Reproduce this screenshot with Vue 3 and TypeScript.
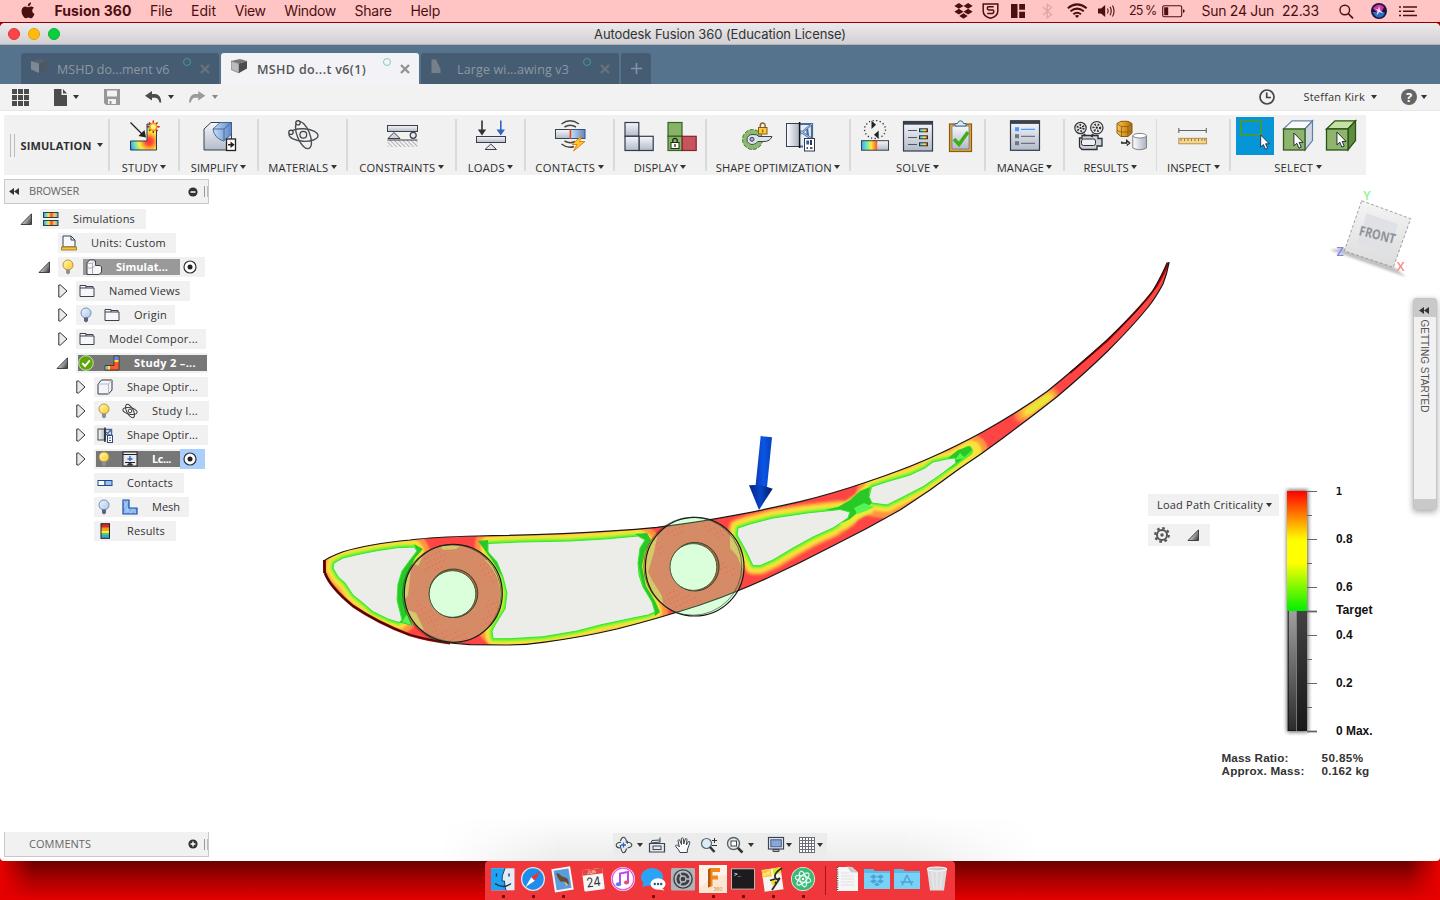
<script setup lang="ts">
interface ToolGroup { label: string; w: number; tw: number; icons: string[] }
interface TreeRow {
  text: string; level: number; w: number; tw: number; icon: string
  exp?: 'open' | 'closed'; lead?: string; bold?: boolean; dark?: string
  darkFrom?: number; darkW?: number; target?: boolean; hot?: boolean
}
interface IconText { t: string; x: number; y: number; size: number; w: number; fill: string; tilt?: number; mono?: boolean }
interface DockItem { id: string; on: boolean; texts?: IconText[] }

// Spreads the letters of a label so that it takes the given width.
const vFit = {
  mounted(el: HTMLElement, binding: { value: number }) {
    const count = (el.textContent ?? '').trim().length
    if (!count) return
    const natural = el.getBoundingClientRect().width
    el.style.letterSpacing = `${(binding.value - natural) / count}px`
  },
}

const menus = [
  { t: 'File', w: 22.5 }, { t: 'Edit', w: 25 }, { t: 'View', w: 31 },
  { t: 'Window', w: 51.5 }, { t: 'Share', w: 37.5 }, { t: 'Help', w: 29.5 },
]

const tabs = [
  { t: 'MSHD do...ment v6', w: 112.5, icon: 't-cube-dim', active: false },
  { t: 'MSHD do...t v6(1)', w: 109, icon: 't-cube', active: true },
  { t: 'Large wi...awing v3', w: 112, icon: 't-draw', active: false },
]

const groups: ToolGroup[] = [
  { label: 'STUDY', w: 70, tw: 36, icons: ['study'] },
  { label: 'SIMPLIFY', w: 79, tw: 47, icons: ['simplify'] },
  { label: 'MATERIALS', w: 89, tw: 60, icons: ['materials'] },
  { label: 'CONSTRAINTS', w: 109, tw: 76, icons: ['constraints'] },
  { label: 'LOADS', w: 69, tw: 37, icons: ['loads'] },
  { label: 'CONTACTS', w: 89, tw: 60, icons: ['contacts'] },
  { label: 'DISPLAY', w: 92, tw: 44, icons: ['disp-a', 'disp-b'] },
  { label: 'SHAPE OPTIMIZATION', w: 144, tw: 116, icons: ['shape-a', 'shape-b'] },
  { label: 'SOLVE', w: 135, tw: 34.5, icons: ['solve-a', 'solve-b', 'solve-c'] },
  { label: 'MANAGE', w: 79, tw: 47, icons: ['manage'] },
  { label: 'RESULTS', w: 92.5, tw: 45, icons: ['results-a', 'results-b'] },
  { label: 'INSPECT', w: 73.5, tw: 44, icons: ['inspect'] },
  { label: 'SELECT', w: 136, tw: 39, icons: ['select-a', 'select-b', 'select-c'] },
]

const rows: TreeRow[] = [
  { text: 'Simulations', level: 0, w: 106, tw: 62, icon: 'n-sims', exp: 'open' },
  { text: 'Units: Custom', level: 1, w: 118, tw: 75, icon: 'n-units' },
  { text: 'Simulat...', level: 1, w: 147, tw: 52, icon: 'n-parts', exp: 'open', lead: 'n-bulb', bold: true, dark: '#999', darkFrom: 25, darkW: 97, target: true },
  { text: 'Named Views', level: 2, w: 114, tw: 71, icon: 'n-folder', exp: 'closed' },
  { text: 'Origin', level: 2, w: 99, tw: 33, icon: 'n-folder', exp: 'closed', lead: 'n-bulb-off' },
  { text: 'Model Compor...', level: 2, w: 130, tw: 89, icon: 'n-folder', exp: 'closed' },
  { text: 'Study 2 –...', level: 2, w: 131, tw: 62, icon: 'n-study', exp: 'open', lead: 'n-check', bold: true, dark: '#777', darkFrom: 2, darkW: 129 },
  { text: 'Shape Optir...', level: 3, w: 114, tw: 71, icon: 'n-cube', exp: 'closed' },
  { text: 'Study I...', level: 3, w: 115, tw: 46, icon: 'n-atom', exp: 'closed', lead: 'n-bulb' },
  { text: 'Shape Optir...', level: 3, w: 114, tw: 71, icon: 'n-shape', exp: 'closed' },
  { text: 'Lc...', level: 3, w: 111, tw: 19, icon: 'n-load', exp: 'closed', lead: 'n-bulb', bold: true, dark: '#777', darkFrom: 2, darkW: 84, target: true, hot: true },
  { text: 'Contacts', level: 3, w: 90, tw: 46, icon: 'n-contact' },
  { text: 'Mesh', level: 3, w: 95, tw: 28, icon: 'n-mesh', lead: 'n-bulb-off' },
  { text: 'Results', level: 3, w: 82, tw: 38, icon: 'n-results' },
]

const ticks = [
  { y: 4, t: '1', w: 6 }, { y: 28 }, { y: 52, t: '0.8', w: 16.5 }, { y: 76 },
  { y: 100, t: '0.6', w: 16.5 }, { y: 124, t: 'Target', w: 36.5, bold: true },
  { y: 148, t: '0.4', w: 16.5 }, { y: 172 }, { y: 196, t: '0.2', w: 16.5 },
  { y: 220 }, { y: 244, t: '0 Max.', w: 36.5, bold: true },
]

const dock: DockItem[] = [
  { id: 'd-finder', on: true }, { id: 'd-safari', on: true }, { id: 'd-mail', on: true },
  {
    id: 'd-cal', on: false, texts: [
      { t: 'JUN', x: 9.8, y: 9.6, size: 4.8, w: 9, fill: '#fff', tilt: -7 },
      { t: '24', x: 8, y: 22.6, size: 13, w: 14.5, fill: '#333', tilt: -7 },
    ],
  },
  { id: 'd-music', on: false }, { id: 'd-msg', on: true }, { id: 'd-prefs', on: false },
  { id: 'd-fusion', on: true, texts: [{ t: '360', x: 15.5, y: 27.2, size: 5, w: 9, fill: '#e8852c' }] },
  { id: 'd-term', on: true, texts: [{ t: '>_', x: 6, y: 12, size: 6, w: 7, fill: '#fff', mono: true }] },
  { id: 'd-pdf', on: true, texts: [{ t: 'pdf', x: 6, y: 10.7, size: 5, w: 7, fill: '#fff', tilt: -8 }] },
  { id: 'd-atom', on: true },
]
const dockRight = ['d-doc', 'd-drop', 'd-apps', 'd-trash']

const body = 'M324 561C327 558 333 555.5 343 551.7C362 546 385 542.5 410 540Q433 537 477 536Q520 535.4 563 533.7Q615 531.3 657 527.3Q700 522 733 515.7Q768 509 800 501.7Q835 493 866 482.3Q900 471 927 459.3Q957 446 983 431.7Q1017 413 1047 391.5Q1075 369 1107 340Q1125 323 1137 310Q1150 296 1154 289Q1162 275 1167 263L1169 262.7Q1167 274 1163 284Q1156 297 1149 306Q1133 326 1107 351.7Q1084 374 1057 396.7Q1030 418 1003 438Q983 453 960 468.3Q930 491 900 510Q867 529 833 545.7Q800 563 767 578.3Q735 593 700 605Q660 618 617 629Q578 638 543 642.3Q525 645 505 645L470 644.7Q440 643 410 635Q378 623 353 606Q330 587 325 573Z'
const holes = [
  { wide: 26, d: 'M334 563L343 558L360 554L377 550.7L397 547.7L414 547L417 551L410 560L402 571L398 584L397 600L402 620L399 622.5L388 619L373 611.7L363 603L353 595L345 583L338 576.7L333 568Z' },
  { wide: 26, d: 'M488 543.5L520 542L570 541L605 539L638 536L645 540L640 548L638 563L639 575L643 587L652 602L655 612L648 615L633 618L600 625L577 631L543 636.7L510 638.7L493 638.7L492 631L495 625L505 609L507 593L503 577L497 562L488 552Z' },
  { wide: 19, d: 'M738 528L750 524L773 518L807 513L840 509.5L850 512L848 518L833 528L813 537L793 548L773 560L760 565.7L753 565.7L747 553L741.7 543L737 535Z' },
  { wide: 27, d: 'M871.7 486.7L887 481.7L910 475L925 468L933 462L947 459L955 458L956 463L940 475L923 486.7L903 497L887 505L872 503L869 496.7Z' },
]
const darkGreen = [
  'M414 544L423 549L415 558L408 574L405 595L407 612L413 626L398 622L402 620L397 600L398 584L402 571L410 560L417 551Z',
  'M478 541L488 540L488 552L497 562L503 577L500 573L492 560Z',
  'M635 534L647 533L651 540L645 552L642 566L646 586L655 601L660 612L655 616L652 602L643 587L638 563L640 548L645 540Z',
  'M825 510L838 507L850 500L860 491L870 487L869 497L872 503L866 508L857 513L850 519L842 523L850 512Z',
  'M948 458L958 450L970 446L972 450L962 459L952 467L940 475Z',
]
</script>

<template>
  <div class="desktop">
    <svg class="sprite" width="0" height="0" aria-hidden="true">
      <defs>
        <linearGradient id="steel" x1="0" y1="0" x2="0" y2="1"><stop offset="0" stop-color="#f6f7fb" /><stop offset="1" stop-color="#b3bac9" /></linearGradient>
        <linearGradient id="steelH"><stop offset="0" stop-color="#fff" /><stop offset="1" stop-color="#a9b0c2" /></linearGradient>
        <linearGradient id="blueG"><stop offset="0" stop-color="#c8defa" /><stop offset="1" stop-color="#5c88c4" /></linearGradient>
        <radialGradient id="heat" gradientUnits="userSpaceOnUse" cx="24" cy="24.500" r="20"><stop offset="0" stop-color="#ff3838" /><stop offset=".17" stop-color="#ff4a38" /><stop offset=".32" stop-color="#ffa030" /><stop offset=".5" stop-color="#f8ee44" /><stop offset=".68" stop-color="#90e490" /><stop offset=".82" stop-color="#50c8f0" /><stop offset=".97" stop-color="#3a80f0" /></radialGradient>
        <linearGradient id="rain"><stop offset="0" stop-color="#4aa0ff" /><stop offset=".3" stop-color="#60e8c0" /><stop offset=".6" stop-color="#ffe840" /><stop offset="1" stop-color="#ff4a20" /></linearGradient>
        <linearGradient id="rainMid"><stop offset="0" stop-color="#3a90f8" /><stop offset=".2" stop-color="#80e0b0" /><stop offset=".35" stop-color="#ffe040" /><stop offset=".55" stop-color="#ff4a28" /><stop offset=".75" stop-color="#ffd040" /><stop offset="1" stop-color="#4ab0f0" /></linearGradient>
        <linearGradient id="gold"><stop offset="0" stop-color="#f4c860" /><stop offset=".5" stop-color="#d99a20" /><stop offset="1" stop-color="#a86c10" /></linearGradient>
        <linearGradient id="tri" x1="0" y1=".2" x2="1" y2=".8"><stop offset=".2" stop-color="#f4f4f4" /><stop offset="1" stop-color="#444" /></linearGradient>
        <linearGradient id="bulbG" x1="0" y1="0" x2="1" y2="1"><stop offset="0" stop-color="#fffbc0" /><stop offset="1" stop-color="#fbc81e" /></linearGradient>
        <linearGradient id="bulbO" x1="0" y1="0" x2="1" y2="1"><stop offset="0" stop-color="#f4f8ff" /><stop offset="1" stop-color="#a8c4f4" /></linearGradient>
        <pattern id="hatch" width="3" height="3" patternUnits="userSpaceOnUse" patternTransform="rotate(-45)"><rect width="3" height="3" fill="#f2f2f4" /><path d="M0 0V3" stroke="#888" stroke-width="1.200" /></pattern>
      </defs>

      <symbol id="cursor" viewBox="0 0 10 16"><path d="M.7 1V13l2.700-2.400 2 4.600 2.200-1-2-4.400H9.300Z" fill="#fff" stroke="#1c2733" stroke-width=".9" /></symbol>

      <!-- Tabs -->
      <symbol id="t-cube" viewBox="0 0 16 15"><path d="M0 2L9 0 16 2 8 4.500Z" fill="#777" /><path d="M0 2L8 4.500V14L0 10.500Z" fill="#bbb" stroke="#666" stroke-width=".6" /><path d="M8 4.500L16 2V9.500L8 14Z" fill="#4c4c4c" /></symbol>
      <symbol id="t-cube-dim" viewBox="0 0 16 15"><path d="M0 2L9 0 16 2 8 4.500Z" fill="#56626e" /><path d="M0 2L8 4.500V14L0 10.500Z" fill="#7c8a95" /><path d="M8 4.500L16 2V9.500L8 14Z" fill="#4d5862" /></symbol>
      <symbol id="t-draw" viewBox="0 0 16 15"><path d="M.5 14V.5H5L9.500 10V14Z" fill="#76808b" /><path d="M7 .5h8V14" fill="none" stroke="#51616f" stroke-width=".7" stroke-dasharray="1.500 2" /></symbol>

      <!-- Tool icons, 38 x 38 -->
      <symbol id="study" viewBox="0 0 38 38">
        <path d="M5.500 24H22V7H31.500V33H5.500Z" fill="url(#heat)" stroke="#2b3a4a" />
        <path d="M5.500 5.500L17 17" stroke="#222" stroke-width="1.200" /><path d="M21 20.500L19.500 13 13.500 19Z" fill="#222" />
        <g stroke="#b81c0c" stroke-width="1.400"><path d="M28.300 3.500V16M22 9.700H34.600M24 5.400L32.600 14M24 14L32.600 5.400" /></g><circle cx="28.300" cy="9.700" r="3.400" fill="#fff7a0" stroke="#ff9a10" stroke-width="1.700" />
      </symbol>
      <symbol id="simplify" viewBox="0 0 38 38">
        <path d="M4 12L11 5.500H31.500V22L28 33H4Z" fill="url(#steel)" stroke="#36424f" />
        <path d="M13 12L20 5.500H31.500V17L23.500 24Q14 21 13 12Z" fill="url(#blueG)" stroke="#3b6299" stroke-width=".9" /><path d="M13 12H24L31.500 5.500M24 12V24" fill="none" stroke="#3b6299" stroke-width=".9" />
        <rect x="26.500" y="22" width="9" height="11.500" fill="#fff" stroke="#222" stroke-width="1.300" /><path d="M28 27h2.500V24.500l4.200 3.200L30.500 31V28.500H28Z" fill="#222" />
      </symbol>
      <symbol id="materials" viewBox="0 0 38 38">
        <g fill="none" stroke="#4b4f55" stroke-width="1.400"><ellipse cx="19.500" cy="18" rx="14.500" ry="6.300" transform="rotate(3 19 18)" /><ellipse cx="19.500" cy="18" rx="14.500" ry="6.300" transform="rotate(68 19.500 18)" /></g>
        <g fill="#e8eaf0" stroke="#3a3d42" stroke-width="1.200"><circle cx="19.300" cy="17.700" r="3.400" /><circle cx="14" cy="5.800" r="2.200" /><circle cx="7" cy="15.300" r="2.200" /></g>
      </symbol>
      <symbol id="constraints" viewBox="0 0 38 38">
        <rect x="4.500" y="8.500" width="30" height="6" fill="url(#steel)" stroke="#3a3f48" /><path d="M11 15.500L17 21.500H5Z" fill="#d4d8e2" stroke="#3a3f48" /><circle cx="30.200" cy="18.300" r="3" fill="#e6e9f0" stroke="#3a3f48" stroke-width="1.200" /><rect x="4.500" y="23" width="30" height="7" fill="url(#hatch)" /><path d="M4.500 23H34.500" stroke="#3a3f48" />
      </symbol>
      <symbol id="loads" viewBox="0 0 38 38">
        <path d="M10 3.500V14" stroke="#333" stroke-width="1.600" /><path d="M5.800 12.500L10 18.500 14.200 12.500Z" fill="#333" /><path d="M28.800 3.500V14" stroke="#3463c8" stroke-width="1.600" /><path d="M24.500 12.500L28.800 18.500 33 12.500Z" fill="#3463c8" />
        <rect x="4.500" y="19.500" width="29" height="6" fill="url(#steel)" stroke="#3a3f48" /><path d="M18.800 27L24.500 32.500H13Z" fill="#e2e5ec" stroke="#3a3f48" />
      </symbol>
      <symbol id="contacts" viewBox="0 0 38 38">
        <g fill="none" stroke="#444" stroke-width="1.500"><path d="M10.500 7Q19 .5 28 7M13.500 10Q19 6.500 25 10M10.500 27Q17 32 23 29.500M13.500 24Q19 27 24 24.500" /></g>
        <rect x="4.500" y="12.500" width="15" height="9" fill="url(#steel)" stroke="#39424f" /><rect x="19.500" y="12.500" width="14.500" height="9" fill="url(#blueG)" stroke="#35557f" /><path d="M19.400 12V22" stroke="#e8421c" stroke-width="1.600" /><path d="M31 18.500L21 27.500H26L22.500 34 34 24.500H28.500Z" fill="#ffc72c" stroke="#d97a14" stroke-width=".9" />
      </symbol>
      <symbol id="disp-a" viewBox="0 0 38 38"><g fill="url(#steel)" stroke="#303c4c" stroke-width="1.200"><rect x="5" y="5.500" width="13.800" height="13.800" /><rect x="5" y="19.300" width="14.200" height="14.200" /><rect x="19.200" y="19.300" width="14" height="14.200" /></g></symbol>
      <symbol id="disp-b" viewBox="0 0 38 38"><g stroke-width="1.200"><rect x="5" y="5.500" width="14" height="13.800" fill="#86b368" stroke="#39621f" /><rect x="5" y="19.300" width="14.200" height="14.200" fill="#86b368" stroke="#39621f" /><rect x="19.200" y="19.300" width="14" height="14.200" fill="#c5545c" stroke="#84242c" /></g><rect x="8" y="25.500" width="8" height="6" fill="#fff" stroke="#1e2a18" /><path d="M9.800 25V23.500a2.200 2.200 0 0 1 4.400 0V25" fill="none" stroke="#1e2a18" stroke-width="1.300" /><path d="M12 27v3" stroke="#1e2a18" stroke-width="1.300" /></symbol>
      <symbol id="shape-a" viewBox="0 0 38 38">
        <circle cx="14.500" cy="22.500" r="7.800" fill="none" stroke="#8cb870" stroke-width="4.500" /><circle cx="14.500" cy="22.500" r="10" fill="none" stroke="#3f7f26" stroke-dasharray="4 1.500" /><path d="M14 17.500Q19 17 21 19.500H34Q32 24.500 26 24.500H20Q17 28 14 27.500A5 5 0 0 1 14 17.500Z" fill="#dfe3ea" stroke="#3c4450" /><circle cx="14" cy="22.300" r="2" fill="#a9b0bc" stroke="#3c4450" />
        <rect x="20.500" y="10.500" width="8.500" height="6.500" fill="#fbc93c" stroke="#8a5a10" /><path d="M22.300 10V8.500a2.400 2.400 0 0 1 4.800 0V10" fill="none" stroke="#8a6a30" stroke-width="1.500" /><path d="M24.700 12.500v3" stroke="#7a4a08" />
      </symbol>
      <symbol id="shape-b" viewBox="0 0 38 38">
        <rect x="5.500" y="6.500" width="13" height="23" fill="url(#steelH)" stroke="#36424f" /><rect x="19" y="6.500" width="12.500" height="23" fill="#e4ecf6" /><path d="M19 7H31V22M19 17L31 7M19 14L31 22M22 29.500H19M26 11L27 19" stroke="#4a6c9c" stroke-width="2.200" fill="none" /><path d="M19 17L31 7M19 14L31 22" stroke="#c2d6f2" stroke-width=".9" /><path d="M18.600 5V31" stroke="#111" stroke-width="1.500" />
        <rect x="23.500" y="21.500" width="10" height="12.500" fill="#fff" stroke="#2e3a48" /><rect x="25.300" y="23.500" width="2.800" height="4" fill="#2b5ca8" /><path d="M30 23v5" stroke="#2e3a48" stroke-width="2" /><path d="M25.500 31h1.500M29 31h2.500" stroke="#222" stroke-width="1.300" />
      </symbol>
      <symbol id="solve-a" viewBox="0 0 38 38">
        <ellipse cx="19" cy="12.500" rx="10.500" ry="9" fill="none" stroke="#333" stroke-width="1.300" stroke-dasharray="1.300 2.300" /><path d="M14.500 2V13L21 7.500Z" fill="#f1f1f1" /><path d="M15.500 3.500V12L20 7.700Z" fill="#222" /><path d="M23.700 12V23L16.500 17.500Z" fill="#f1f1f1" /><path d="M22.700 13.500V22L18 17.700Z" fill="#222" /><rect x="5.500" y="23.700" width="16" height="9.500" fill="url(#rain)" /><rect x="21.500" y="23.700" width="11.500" height="9.500" fill="url(#steel)" /><rect x="5.500" y="23.700" width="27" height="9.500" fill="none" stroke="#3a3f48" />
      </symbol>
      <symbol id="solve-b" viewBox="0 0 38 38">
        <rect x="4.500" y="4.500" width="29" height="29.500" fill="url(#steel)" stroke="#333b46" stroke-width="1.200" /><rect x="4.500" y="4.500" width="29" height="3.200" fill="#39414d" /><g stroke="#555"><path d="M9 13.500h9M9 20.500h9M9 27.500h9" /></g><g fill="url(#rain)" stroke="#222" stroke-width=".9"><rect x="20.500" y="11.800" width="8" height="3" /><rect x="20.500" y="18.800" width="8" height="3" /><rect x="20.500" y="25.800" width="8" height="3" /></g>
      </symbol>
      <symbol id="solve-c" viewBox="0 0 38 38">
        <rect x="7.500" y="7" width="22" height="27.500" fill="#e0a640" stroke="#8a5a14" stroke-width="1.200" /><path d="M10 9H27V32H10Z" fill="url(#steel)" stroke="#5a7090" stroke-width=".7" /><path d="M13 9V6.500h2.500Q16 3.800 18.500 3.800T21.500 6.500H24V9Z" fill="#dfe9f4" stroke="#3c6a86" /><path d="M12 22L17 27.500 26 15" fill="none" stroke="#3fae1c" stroke-width="3.600" />
      </symbol>
      <symbol id="manage" viewBox="0 0 38 38">
        <rect x="4.500" y="3.800" width="29" height="29.500" fill="url(#steel)" stroke="#333b46" stroke-width="1.200" /><rect x="4.500" y="3.500" width="29" height="3.400" fill="#39414d" /><rect x="9" y="10.200" width="4" height="4" fill="#4a9bff" /><rect x="9" y="17.200" width="4" height="4" fill="#6d7787" /><rect x="9" y="24.200" width="4" height="4" fill="#6d7787" /><path d="M15 12.300H29" stroke="#4a9bff" stroke-width="1.300" /><path d="M15 19.300H29M15 26.300H29" stroke="#555e6c" />
      </symbol>
      <symbol id="results-a" viewBox="0 0 38 38">
        <g fill="#e4e6ea" stroke="#333"><circle cx="10.500" cy="11" r="5.700" stroke-width="1.200" /><circle cx="26.800" cy="10.700" r="6.200" stroke-width="1.200" /></g><g fill="none" stroke="#333" stroke-width="2.200" stroke-dasharray="1.500 1.700"><circle cx="10.500" cy="11" r="3" /><circle cx="26.800" cy="10.700" r="3.300" /></g><g fill="#222"><circle cx="10.500" cy="11" r="1.100" /><circle cx="26.800" cy="10.700" r="1.100" /></g>
        <path d="M12 18.500H28V21.500H32V29H27V32.500H12L9.500 30V21L12 21Z" fill="#cdd1da" stroke="#2c3036" stroke-width="1.300" /><rect x="11.500" y="22" width="14" height="6.500" rx="2" fill="#eef0f4" stroke="#2c3036" /><path d="M14 17L15.500 19M23 17L21.500 20" stroke="#2c3036" stroke-width="2" />
      </symbol>
      <symbol id="results-b" viewBox="0 0 38 38">
        <path d="M4 6.500L8 4.300H15L19 6.500V16L15 19.500H8L4 16Z" fill="url(#gold)" stroke="#8a5a10" /><path d="M4.500 7L8.500 9.500H15L18.500 7M8.500 9.500V19M15 9.500V19M4 13.500L8.500 15H15L19 13.500" fill="none" stroke="#8a5a10" stroke-width=".8" /><path d="M8.700 24.500V26h5V23.500l3 2.500-3 2.500" fill="none" stroke="#222" stroke-width="1.300" /><path d="M19.800 18.500V31Q26.500 34.500 33.500 31V18.500" fill="url(#steelH)" stroke="#777" stroke-width=".9" /><ellipse cx="26.700" cy="18.700" rx="6.800" ry="2.300" fill="#fff" stroke="#777" stroke-width=".9" />
      </symbol>
      <symbol id="inspect" viewBox="0 0 38 38"><path d="M4.800 11V16M32.300 11V16M4.800 13.500H32.300" stroke="#666" stroke-width="1.100" /><rect x="4.800" y="21.300" width="27.800" height="5.500" fill="#f2d494" stroke="#b48a3c" stroke-width=".9" /><path d="M7 21.500v2.500M10.500 21.500v2.500M14 21.500v2.500M17.500 21.500v2.500M21 21.500v2.500M24.500 21.500v2.500M28 21.500v2.500M30.800 21.500v2.500" stroke="#8a6420" stroke-width=".8" /></symbol>
      <symbol id="select-a" viewBox="0 0 38 38"><rect width="38" height="38" fill="#0696d7" /><rect x="4.700" y="4" width="20.300" height="13.700" fill="none" stroke="#5a9c08" stroke-width="1.400" /><use href="#cursor" x="24" y="17" width="10" height="16" /></symbol>
      <symbol id="select-b" viewBox="0 0 38 38"><path d="M4.500 12L13 3.800H33.500L26 12Z" fill="#f8fafc" stroke="#6c86a8" stroke-width="1.200" /><path d="M26 12L33.500 3.800V23.500L26 33Z" fill="#cfd6e2" stroke="#5f7ea8" stroke-width="1.200" /><rect x="4.500" y="12" width="21.500" height="21" fill="#8fb46c" stroke="#345a1e" stroke-width="1.300" /><use href="#cursor" x="14" y="15" width="11" height="17" /></symbol>
      <symbol id="select-c" viewBox="0 0 38 38"><g stroke="#2c5217" stroke-width="1.300"><path d="M4.500 12L13 3.800H33.500L26 12Z" fill="#c4e2a4" /><path d="M26 12L33.500 3.800V23.500L26 33Z" fill="#5d8e40" /><rect x="4.500" y="12" width="21.500" height="21" fill="#8fb46c" /></g><use href="#cursor" x="14" y="14" width="11" height="17" /></symbol>

      <!-- Tree icons, 16 x 16 -->
      <symbol id="n-sims" viewBox="0 0 16 16"><g fill="url(#rainMid)" stroke="#24405c"><rect x=".5" y="1.500" width="14.500" height="5" /><rect x=".5" y="9.500" width="14.500" height="5" /></g></symbol>
      <symbol id="n-units" viewBox="0 0 16 16"><path d="M2 12V1h8l4 4v7Z" fill="#f5f8fc" stroke="#39424f" /><path d="M10 1v4h4" fill="none" stroke="#39424f" /><rect x=".6" y="12" width="14.800" height="3" fill="#f6c23c" stroke="#9a6a10" stroke-width=".8" /></symbol>
      <symbol id="n-bulb" viewBox="0 0 16 16"><circle cx="8" cy="6" r="5" fill="url(#bulbG)" stroke="#b98a2a" stroke-width=".9" /><path d="M6 10.500H10V14L8 15.500 6 14Z" fill="#8a8f98" /></symbol>
      <symbol id="n-bulb-off" viewBox="0 0 16 16"><circle cx="8" cy="6" r="5" fill="url(#bulbO)" stroke="#6f83a8" stroke-width=".9" /><path d="M6 10.500H10V14L8 15.500 6 14Z" fill="#5a6474" /></symbol>
      <symbol id="n-parts" viewBox="0 0 16 16"><path d="M1 4L3.500 1H8.500L9.500 2V6.500H14L15.500 8V13L13 15.500H1Z" fill="#f6f7f9" stroke="#333" stroke-width=".9" /><path d="M1 9H6.500L9 6.500M6.500 9V15.500M6.500 4.500V9M1.500 4.300H6.500L9 2" fill="none" stroke="#888e98" stroke-width=".7" /></symbol>
      <symbol id="n-folder" viewBox="0 0 16 16"><path d="M1 13.500V2.500h6V5h8V13.500Z" fill="#f6f7f9" stroke="#3c434e" /><path d="M1 5H7M7 3.500H14V5" fill="none" stroke="#3c434e" /></symbol>
      <symbol id="n-check" viewBox="0 0 16 16"><circle cx="8" cy="8" r="7.300" fill="#5ea60c" stroke="#d2eeb0" stroke-width=".9" /><path d="M4.300 8.200L7 11l4.800-5.600" fill="none" stroke="#fff" stroke-width="1.900" /></symbol>
      <symbol id="n-study" viewBox="0 0 16 16"><path d="M1 10.500H10V1H15V15H1Z" fill="#ff5a2c" stroke="#222" stroke-width=".7" /><path d="M10.500 1.500h4V5h-4Z" fill="#4a90f0" /><path d="M10.500 5h4v2h-4Z" fill="#fbe040" /><path d="M1.500 11H4v3.500H1.500Z" fill="#6cc0e0" /><path d="M4 11h2v3.500H4Z" fill="#fbe040" /></symbol>
      <symbol id="n-cube" viewBox="0 0 16 16"><path d="M1 5L4.500 1H15V11L11.500 15H1Z" fill="#f3f4f7" stroke="#333b46" /><path d="M1 5H11.500V15M11.500 5L15 1" fill="none" stroke="#b4b8c4" /></symbol>
      <symbol id="n-atom" viewBox="0 0 16 16"><g fill="none" stroke="#3a3d42" stroke-width="1"><ellipse cx="8" cy="8" rx="7.300" ry="3.300" transform="rotate(12 8 8)" /><ellipse cx="8" cy="8" rx="7.300" ry="3.300" transform="rotate(62 8 8)" /></g><circle cx="8" cy="8" r="1.800" fill="#fff" stroke="#3a3d42" /></symbol>
      <symbol id="n-shape" viewBox="0 0 16 16"><rect x="1" y="2" width="7" height="11" fill="url(#steelH)" stroke="#444" /><path d="M9 2.500H14.500V9M9 8L14 3M9 5l5 4" stroke="#4a6c9c" fill="none" stroke-width="1.500" /><path d="M8 .5V15" stroke="#111" stroke-width="1.300" /><rect x="10.500" y="8.500" width="5" height="7" fill="#fff" stroke="#2e4a78" /><path d="M12 11h2M12 13.500h2" stroke="#2b5ca8" /></symbol>
      <symbol id="n-load" viewBox="0 0 16 16"><rect x="1" y="1" width="14" height="14" fill="#e8eaef" stroke="#222" /><path d="M1 3.500H15" stroke="#222" /><path d="M8 5v5M5.500 8H10.500" stroke="#3463c8" stroke-width="1.400" /><path d="M3 11.500H13M8 11.500L10.500 14H5.500Z" fill="#444" stroke="#222" /></symbol>
      <symbol id="n-contact" viewBox="0 0 16 16"><rect x="1" y="5.500" width="7" height="5" fill="#fff" stroke="#1f4a90" /><rect x="8" y="5.500" width="7" height="5" fill="#9cc0f0" stroke="#1f4a90" /></symbol>
      <symbol id="n-mesh" viewBox="0 0 16 16"><path d="M1 1H7V9H15V15H1Z" fill="#7fb2ee" stroke="#1c4f9c" stroke-width="1.200" /><path d="M1.500 2L6 9 2 14M6 2L2 8 9 14 11 10 14 14M7 10L4 14" fill="none" stroke="#c4dcf8" stroke-width=".7" /></symbol>
      <symbol id="n-results" viewBox="0 0 16 16"><rect x="4" y=".7" width="8.500" height="14.600" fill="#d32c2c" /><rect x="4" y="4.500" width="8.500" height="3" fill="#f59a20" /><rect x="4" y="7.500" width="8.500" height="2.500" fill="#f8ec3c" /><rect x="4" y="10" width="8.500" height="2" fill="#5cd04a" /><rect x="4" y="12" width="8.500" height="3" fill="#2fa6e8" /><rect x="4" y=".7" width="8.500" height="14.600" fill="none" stroke="#222" /></symbol>

      <!-- Navigation icons, 18 x 18 -->
      <symbol id="v-orbit" viewBox="0 0 18 18"><g fill="none" stroke="#3c4450" stroke-width="1.100"><path d="M5.500 5Q6.500 1.300 8.500 1.300T11.500 5.500M11.500 12.500Q10.500 16.700 8.500 16.700T5.200 9M5 12Q1 11.500 1.200 9T6 6.300M12.500 12Q16.800 11 16.800 9T13 6.300" /></g><path d="M8.500 6.500v5M6 9h5" stroke="#2468d0" stroke-width="1.300" /><path d="M13 4.500V8L10.500 6Z" fill="#3c4450" /></symbol>
      <symbol id="v-look" viewBox="0 0 18 18"><path d="M1.500 7.500H16.500V16H1.500Z" fill="#e8e9ec" stroke="#3c4450" stroke-width="1.200" /><rect x="5" y="10" width="8" height="3.500" fill="none" stroke="#3c4450" /><path d="M3 7L4 4.500 12 4M12 1.500V6.500M3 7L12 6" fill="none" stroke="#3c4450" /></symbol>
      <symbol id="v-hand" viewBox="0 0 18 18"><path d="M6 16.500Q4.500 13 2 11 1 9.500 2.300 9T5.300 11L4 4.500Q4.500 3 5.700 4L7.500 8.500 7.300 2.500Q8.300 1 9.300 2.500L9.800 8 11.300 2.800Q12.700 2 13 3.500L12.300 9 14.500 5.500Q16 5 15.800 6.800L13.300 14V16.500Z" fill="#fbfbfb" stroke="#3c4450" /></symbol>
      <symbol id="v-zoom" viewBox="0 0 18 18"><circle cx="6.500" cy="7.500" r="5" fill="#d8eef4" stroke="#5a646e" stroke-width="1.200" /><path d="M10 11L14.500 16" stroke="#333" stroke-width="2.500" /><path d="M14.500 2v5M12 4.500h5M12 9.500h5" stroke="#333" /></symbol>
      <symbol id="v-fit" viewBox="0 0 18 18"><circle cx="7.500" cy="7.500" r="6" fill="#e4ecec" stroke="#5a646e" stroke-width="1.400" /><rect x="5" y="5" width="5.500" height="5" fill="#fff" stroke="#444" /><path d="M11.800 11.800L16.500 16.500" stroke="#333" stroke-width="2.600" /></symbol>
      <symbol id="v-screen" viewBox="0 0 18 18"><rect x="1.500" y="1.500" width="15" height="11.500" fill="#f0f1f4" stroke="#3c4450" stroke-width="1.200" /><rect x="3.800" y="3.800" width="10.500" height="7" fill="#8ca6d8" stroke="#3c5a90" /><path d="M6 15.500H12V13.500H6Z" fill="#b8bcc4" stroke="#3c4450" /></symbol>
      <symbol id="v-grid" viewBox="0 0 18 18"><rect x="1.500" y="1.500" width="15" height="15" fill="#fff" stroke="#6a6e76" /><path d="M4.500 1V17M7.500 1V17M10.500 1V17M13.500 1V17M1 4.500H17M1 7.500H17M1 10.500H17M1 13.500H17" stroke="#6a6e76" /></symbol>

      <!-- Dock icons, 30 x 30 -->
      <symbol id="d-finder" viewBox="0 0 30 30"><rect x="3" y="4.300" width="23.500" height="22" fill="#e2ecf6" /><path d="M3 4.300H17Q13.500 12 14 17H16.500Q16.500 22 18 26.300H3Z" fill="#1ea2f2" /><path d="M17 4.300Q13.500 12 14 17H16.500Q16.500 22 18 26.300" fill="none" stroke="#14324e" stroke-width=".9" /><path d="M8.500 9.500v3M21 9.500v3M7 19.500Q15 25.500 23 19.500" fill="none" stroke="#14324e" stroke-width="1.300" /></symbol>
      <symbol id="d-safari" viewBox="0 0 30 30"><circle cx="15" cy="15" r="12" fill="#dfe6ec" /><circle cx="15" cy="15" r="10.700" fill="#1d8cec" /><path d="M22.500 7L16.800 16.800 13.200 13.200Z" fill="#f0342c" /><path d="M7.500 23L13.200 13.200 16.800 16.800Z" fill="#fff" /></symbol>
      <symbol id="d-mail" viewBox="0 0 30 30"><g transform="rotate(-9 15 15)"><rect x="5" y="3.500" width="19" height="23.500" fill="#f4f6f8" /><rect x="7" y="5.500" width="15" height="19.500" fill="#5a9cdc" /><path d="M9 8.500Q12 8 14 12L19 15Q21 18 19.500 22L17 18 12 17Q10 14 9 8.500Z" fill="#6a4a30" /><path d="M16 18L19 21 17 23Z" fill="#e8c060" /></g></symbol>
      <symbol id="d-cal" viewBox="0 0 30 30"><g transform="rotate(-7 15 15)"><rect x="5" y="5" width="20.500" height="21.500" rx="1.500" fill="#f7f7f7" /><path d="M5 10.500V6.500A1.500 1.500 0 0 1 6.500 5H24A1.500 1.500 0 0 1 25.500 6.500V10.500Z" fill="#e2453c" /></g></symbol>
      <symbol id="d-music" viewBox="0 0 30 30"><circle cx="15" cy="15" r="12" fill="#fff" /><circle cx="15" cy="15" r="10.800" fill="none" stroke="#d85af0" stroke-width="1.300" /><path d="M12 20V9.500L20 8V18" fill="none" stroke="#c048e8" stroke-width="2" /><ellipse cx="10.500" cy="20.300" rx="2.600" ry="2" fill="#5a78f0" /><ellipse cx="18.500" cy="18.500" rx="2.600" ry="2" fill="#f04878" /></symbol>
      <symbol id="d-msg" viewBox="0 0 30 30"><ellipse cx="14" cy="13" rx="11" ry="9" fill="#2ba4f8" /><path d="M6 18L4 23 12 21Z" fill="#2ba4f8" /><ellipse cx="20" cy="20" rx="7.500" ry="5.800" fill="#fff" /><path d="M24 24L26.500 26.500 21 25.500Z" fill="#fff" /><g fill="#27548c"><circle cx="16.800" cy="20" r="1.200" /><circle cx="20" cy="20" r="1.200" /><circle cx="23.200" cy="20" r="1.200" /></g></symbol>
      <symbol id="d-prefs" viewBox="0 0 30 30"><rect x="3" y="4" width="24" height="22.500" rx="1.500" fill="#aeb3b8" /><circle cx="15" cy="15" r="9.800" fill="#3c4046" /><circle cx="15" cy="15" r="7.500" fill="none" stroke="#b8bcc2" stroke-width="1.800" /><path d="M15 15L11.500 8.500M15 15L11.500 21.500M15 15H22.500" stroke="#b8bcc2" stroke-width="1.500" /><circle cx="15" cy="15" r="3" fill="#3c4046" stroke="#b8bcc2" stroke-width="1.300" /></symbol>
      <symbol id="d-fusion" viewBox="0 0 30 30"><rect x="1" y="1" width="28" height="28" fill="#fbe6d2" /><path d="M1 1H29V12Q12 12 1 25Z" fill="#fdf3e8" /><path d="M10 5.500L12.500 4H22V8H14.500V11.500H20V15.500H14.500V22L10 23.500Z" fill="#ee8a1e" /><path d="M10 5.500L12.500 4V22.500L10 23.500Z" fill="#b8560c" /></symbol>
      <symbol id="d-term" viewBox="0 0 30 30"><rect x="3" y="4.300" width="24" height="21.300" rx="1" fill="#b8b8b8" /><rect x="4" y="5.300" width="22" height="19.300" fill="#1c1c1e" /></symbol>
      <symbol id="d-pdf" viewBox="0 0 30 30"><g transform="rotate(-8 15 15)"><rect x="5" y="4.500" width="19" height="22" fill="#f6f6f0" /><rect x="5" y="5" width="9" height="7" fill="#ffc81c" /><rect x="16" y="4.500" width="8" height="6" fill="#dce81c" /><rect x="13" y="15" width="5" height="6" fill="#f0de20" /></g><path d="M24 4Q16 9 17 13T22 14M17 15L12 16.500M22 14L14 26M17 18L19 20" fill="none" stroke="#2a2a2a" stroke-width="1.800" /></symbol>
      <symbol id="d-atom" viewBox="0 0 30 30"><circle cx="15" cy="15" r="12" fill="#eef4f0" /><circle cx="15" cy="15" r="11.200" fill="#3cb878" /><g fill="none" stroke="#e2fbee" stroke-width="1.200"><ellipse cx="15" cy="15" rx="8" ry="3.200" transform="rotate(15 15 15)" /><ellipse cx="15" cy="15" rx="8" ry="3.200" transform="rotate(75 15 15)" /><ellipse cx="15" cy="15" rx="8" ry="3.200" transform="rotate(135 15 15)" /></g><circle cx="15" cy="15" r="1.300" fill="#fff" /></symbol>
      <symbol id="d-doc" viewBox="0 0 30 30"><path d="M5 3H20L26 8.500V27H5Z" fill="#f6f6f6" /><path d="M15 2.500L19 8.500 26 8.500 20 3Z" fill="#c8ccd2" /><path d="M5.500 3V27" stroke="#444" stroke-width="1.600" stroke-dasharray="1 1.200" /><path d="M9 12h13M9 15h13M9 18h13M9 21h13M9 9h8" stroke="#dcdce0" stroke-width=".8" /></symbol>
      <symbol id="d-drop" viewBox="0 0 30 30"><path d="M2 5H11L13 7H28V25H2Z" fill="#5cb8e4" /><path d="M2 9H28V25H2Z" fill="#78d2f8" /><path d="M11.500 10.500l3.500 2.200-3.500 2.200L8 12.700ZM18.500 10.500l3.500 2.200-3.500 2.200-3.500-2.200ZM11.500 15l3.500 2.200-3.500 2.200L8 17.200ZM18.500 15l3.500 2.200-3.500 2.200-3.500-2.200ZM15 18.500l3 2-3 1.800-3-1.800Z" fill="#48a4d4" /></symbol>
      <symbol id="d-apps" viewBox="0 0 30 30"><path d="M2 5H11L13 7H28V25H2Z" fill="#5cb8e4" /><path d="M2 9H28V25H2Z" fill="#78d2f8" /><path d="M15 11L10 21.500M15 11L20 21.500M8.500 18H21.500" stroke="#48a4d4" stroke-width="1.400" fill="none" /></symbol>
      <symbol id="d-trash" viewBox="0 0 30 30"><path d="M5 4.500H25L22 26.500H8Z" fill="#dcdcde" /><ellipse cx="15" cy="5" rx="10" ry="2" fill="#c8cace" stroke="#fff" /><path d="M10 8L12 25M15 8V25M20 8L18 25" stroke="#e8e8ea" stroke-width="1.500" /></symbol>
    </svg>

    <header class="menubar">
      <svg class="apple" viewBox="0 0 14 17"><path d="M10 .3Q10.200 2 9.100 3.200T6.800 4.300Q6.600 2.700 7.700 1.600T10 .3ZM12.900 5.800Q11.200 6.900 11.200 8.800 11.300 11.100 13.500 12 12.900 13.700 11.900 15 11 16.200 10.100 16.200 9.400 16.200 8.800 15.900T7.300 15.600Q6.400 15.600 5.800 15.900T4.500 16.200Q3.500 16.200 2.400 14.600 .4 11.800 .5 9.100.6 6.800 1.900 5.600T4.500 4.500Q5.300 4.500 6.100 4.900T7.300 5.200Q7.700 5.200 8.700 4.800T10.500 4.500Q12 4.700 12.900 5.800Z" fill="#4c0f10" /></svg>
      <b v-fit="77" class="appname">Fusion 360</b>
      <nav class="menus"><span v-for="m in menus" :key="m.t" v-fit="m.w">{{ m.t }}</span></nav>
      <div class="status">
        <svg class="w27" viewBox="0 0 27 22"><path d="M8.900 3l4.600 2.900L8.900 8.800 4.300 5.900ZM18.100 3l4.600 2.900-4.600 2.900-4.600-2.900ZM8.900 8.800l4.600 2.900-4.600 2.900-4.600-2.900ZM18.100 8.800l4.600 2.900-4.600 2.900-4.600-2.900ZM13.500 13.300l4.200 2.700-4.200 2.700L9.300 16Z" fill="#4c0f10" /></svg>
        <svg class="w27" viewBox="0 0 27 22"><path d="M6.200 4H20.800V11Q20.800 16.500 13.500 18.300 6.200 16.500 6.200 11Z" fill="none" stroke="#4c0f10" stroke-width="1.500" /><path d="M16.700 6.800H11.500Q10.300 6.800 10.300 8T11.500 9.900H15.500Q16.800 9.900 16.800 11.500T15.500 13.500H10.200" fill="none" stroke="#4c0f10" stroke-width="1.500" /></svg>
        <svg class="w28" viewBox="0 0 28 22"><path d="M7 4h6.500V18H7ZM15.200 4H21V9.800H15.200ZM15.200 11.700H21V18H15.200Z" fill="#4c0f10" /></svg>
        <svg class="w30" viewBox="0 0 30 22"><path d="M11 7L19.500 14.500 15.200 18V4L19.500 7.500 11 15" fill="none" stroke="#e0a4a6" stroke-width="1.300" /></svg>
        <svg class="w30" viewBox="0 0 30 22"><g fill="none" stroke="#4c0f10" stroke-width="2"><path d="M5.800 8.200Q15 .5 24.700 8.200M8.500 11.300Q15 6 21.800 11.300M11.300 14.200Q15 11.200 19 14.200" /></g><path d="M12.800 15.800Q15 14 17.200 15.800L15 18Z" fill="#4c0f10" /></svg>
        <svg class="w28" viewBox="0 0 28 22"><path d="M6 8.500H9L13.200 5V17L9 13.500H6Z" fill="#4c0f10" /><path d="M15.500 8.500Q17 11 15.500 13.500M18 6.800Q20.500 11 18 15.200M20.500 5.500Q23.600 11 20.500 16.500" fill="none" stroke="#4c0f10" stroke-width="1.100" /></svg>
        <span v-fit="27.5" class="pct">25 %</span>
        <svg class="battery" viewBox="0 0 23 22"><rect x=".7" y="5.700" width="19" height="11" rx="1.500" fill="none" stroke="#4c0f10" stroke-width="1.100" /><rect x="2.200" y="7.300" width="4" height="7.900" fill="#4c0f10" /><path d="M21 9.200Q22.700 9.500 22.700 11T21 12.900Z" fill="#4c0f10" /></svg>
        <span v-fit="72.5" class="date">Sun 24 Jun</span>
        <span v-fit="37" class="time">22.33</span>
        <svg class="w30 search" viewBox="0 0 30 22"><circle cx="13.800" cy="10" r="4.800" fill="none" stroke="#4c0f10" stroke-width="1.400" /><path d="M17.200 13.500L22 18.400" stroke="#4c0f10" stroke-width="1.700" /></svg>
        <svg class="w30 siri" viewBox="0 0 30 22"><circle cx="15" cy="11" r="8" fill="#1b1440" /><path d="M9 8Q15 1.500 20 7L17 13Q13 14 9 8Z" fill="#d0389c" /><path d="M8.500 12Q11 17.500 15 17.500T21 13L17 11 12 12Z" fill="#2a6cc8" /><path d="M15 6L16.200 10.500 19.500 13.500 15.500 12 12.500 15.500 13.700 11 11 8.500 14.200 9.700Z" fill="#f4e8ff" /></svg>
        <svg class="list" viewBox="0 0 18 22"><path d="M0 7H2M4 7H18M0 11.300H2M4 11.300H15.500M0 15.500H2M4 15.500H18" stroke="#4c0f10" stroke-width="1.600" /></svg>
      </div>
    </header>

    <main class="window">
      <div class="titlebar">
        <i class="light red"></i><i class="light amber"></i><i class="light green"></i>
        <span v-fit="252" class="title">Autodesk Fusion 360 (Education License)</span>
      </div>

      <div class="tabs">
        <div v-for="t in tabs" :key="t.t" class="tab" :class="{ active: t.active }">
          <svg class="tabicon"><use :href="'#' + t.icon" /></svg>
          <span v-fit="t.w" class="tabtext">{{ t.t }}</span>
          <i class="ring"></i>
          <svg class="close" viewBox="0 0 10 10"><path d="M1 1L9 9M9 1L1 9" stroke-width="2.400" /></svg>
        </div>
        <div class="tab plus"><svg width="11" height="11" viewBox="0 0 11 11"><path d="M5.500 0V11M0 5.500H11" stroke="#8594a3" stroke-width="1.600" /></svg></div>
      </div>

      <div class="quick">
        <svg class="q-grid" viewBox="0 0 17 17"><path d="M0 2.500H17M0 8.500H17M0 14.500H17" stroke="#4c4c4c" stroke-width="5" stroke-dasharray="5 1" /></svg>
        <svg class="q-file" viewBox="0 0 13 17"><path d="M0 0H7.500V6H13V17H0ZM9 0L13 4.500H9Z" fill="#4c4c4c" /></svg>
        <i class="caret"></i>
        <svg class="q-save" viewBox="0 0 16 16"><path d="M0 0H16V16H2L0 14Z" fill="#979797" /><path d="M3 1.500H13V7.500H3Z" fill="#f2f2f2" /><path d="M4 10H12V15H4Z" fill="#f2f2f2" /><path d="M5.500 12h2v3h-2Z" fill="#979797" /></svg>
        <svg class="q-undo" viewBox="0 0 17 12"><path d="M0 4.800L7 0V3H10.500Q16 3.500 16.300 11.500H14.500Q13.500 7 10 6.800H7V9.600Z" fill="#4c4c4c" /></svg>
        <i class="caret"></i>
        <svg class="q-redo" viewBox="0 0 17 12"><path d="M16.300 4.800L9.300 0V3H5.800Q.3 3.500 0 11.500H1.800Q2.800 7 6.300 6.800H9.300V9.600Z" fill="#9b9b9b" /></svg>
        <i class="caret dim"></i>
        <svg class="q-clock" viewBox="0 0 16 16"><circle cx="8" cy="8" r="7" fill="none" stroke="#454545" stroke-width="1.700" /><path d="M7.700 3.500V8.500H12" fill="none" stroke="#454545" stroke-width="1.700" /></svg>
        <span v-fit="61.5" class="user">Steffan Kirk</span>
        <i class="caret"></i>
        <span class="help">?</span>
        <i class="caret"></i>
      </div>

      <div class="toolbar">
        <div class="workspace"><i class="grip"></i><b v-fit="71">SIMULATION</b><i class="caret"></i></div>
        <div v-for="g in groups" :key="g.label" class="group" :style="{ width: g.w + 'px' }">
          <div class="icons"><svg v-for="i in g.icons" :key="i"><use :href="'#' + i" /></svg></div>
          <div class="glabel"><span v-fit="g.tw">{{ g.label }}</span><i class="caret"></i></div>
        </div>
      </div>

      <section class="viewport">
        <svg class="scene" viewBox="0 175 1440 686">
          <defs>
            <clipPath id="bodyClip"><path :d="body" /></clipPath>
            <clipPath id="pinA"><circle cx="453.300" cy="593.300" r="49" /></clipPath>
            <clipPath id="pinB"><circle cx="694.700" cy="566.700" r="49.300" /></clipPath>
            <filter id="soft" x="-5%" y="-20%" width="110%" height="140%"><feGaussianBlur stdDeviation="1.300" /></filter>
            <filter id="soft2" x="-50%" y="-50%" width="200%" height="200%"><feGaussianBlur stdDeviation="2" /></filter>
            <linearGradient id="arrowG"><stop offset="0" stop-color="#0a3cb0" /><stop offset=".5" stop-color="#0a55e8" /><stop offset="1" stop-color="#0640b8" /></linearGradient>
            <linearGradient id="headG"><stop offset="0" stop-color="#04268a" /><stop offset=".5" stop-color="#0846c8" /><stop offset="1" stop-color="#021a60" /></linearGradient>
            <linearGradient id="floor" x1="0" y1="0" x2="0" y2="1"><stop offset="0" stop-color="#000" stop-opacity="0" /><stop offset="1" stop-color="#000" stop-opacity=".075" /></linearGradient>
            <pattern id="dots" width="4" height="5" patternUnits="userSpaceOnUse" patternTransform="rotate(-25)"><rect width="1.500" height="1.200" fill="#f06450" /></pattern>
            <linearGradient id="cubeG" x1="0" y1="0" x2="0" y2="1"><stop offset="0" stop-color="#f4f4f4" /><stop offset="1" stop-color="#dcdcdd" /></linearGradient>
          </defs>

          <g clip-path="url(#bodyClip)">
            <path :d="body" fill="#ff4444" />
            <g filter="url(#soft)" fill="none" stroke-linejoin="round">
              <path v-for="(h, i) in holes" :key="'o' + i" :d="h.d" stroke="#ff9440" :stroke-width="h.wide" />
              <path d="M945 466L972 451" stroke="#ff9a40" stroke-width="32" stroke-linecap="round" />
              <path v-for="(h, i) in holes" :key="'y' + i" :d="h.d" stroke="#ffdc3c" stroke-width="14" />
              <path d="M948 465L971 451" stroke="#fbe23a" stroke-width="21" stroke-linecap="round" />
              <path v-for="(h, i) in holes" :key="'z' + i" :d="h.d" stroke="#d8f034" stroke-width="8" />
              <path v-for="(h, i) in holes" :key="'l' + i" :d="h.d" stroke="#58f030" stroke-width="4.500" />
              <path d="M840 509Q854 503 868 489M842 526Q858 513 872 508" stroke="#e8ec38" stroke-width="9" />
            </g>
            <path d="M950 464L968 451" stroke="#50f030" stroke-width="10" stroke-linecap="round" />
            <path v-for="(g, i) in darkGreen" :key="'g' + i" :d="g" fill="#28c828" />
            <path d="M854 508L864 503 874 507 866 511 857 514ZM955 460L960 453 965 458ZM402 622L407 614 411 625Z" fill="#54f454" />
            <g filter="url(#soft2)"><path d="M1022 415L1051 395" stroke="#ff9e40" stroke-width="14" stroke-linecap="round" /><path d="M1027 412L1049 397" stroke="#fce23a" stroke-width="9" stroke-linecap="round" /></g>
            <path d="M1029 411L1048 397.500" stroke="#dcec34" stroke-width="3" stroke-linecap="round" filter="url(#soft)" />
            <path d="M426 534L436 534 438 546 430 548ZM450 534L464 534 460 545 456 545ZM468 646L476 632 490 646Z" fill="#ff4444" filter="url(#soft)" />
          </g>
          <path v-for="(h, i) in holes" :key="'f' + i" :d="h.d" fill="#ecece8" stroke="#36e82c" stroke-width="1" />
          <path d="M325 573Q330 587 353 606Q378 623 410 635Q430 641 450 643" fill="none" stroke="#a80000" stroke-width="2.800" />
          <path d="M324.500 560V573" stroke="#a80000" stroke-width="3" />
          <path d="M1168 264Q1160 282 1153 291Q1140 308 1107 341L1070 373" fill="none" stroke="#b80000" stroke-width="2" />
          <path :d="body" fill="none" stroke="#161616" stroke-width="1.200" />

          <circle cx="453.300" cy="593.300" r="49" fill="#d58c66" />
          <g clip-path="url(#pinA)">
            <path d="M404 565L412 562 418 566 422 558 424 548 402 550ZM402 566L412 560 408 595 405 600 408 610 416 613 424 630 402 620ZM440 546L460 546 456 549 443 550ZM485 560Q500 575 500 594T492 622L506 600 500 560Z" fill="#d3d46a" opacity=".85" />
            <path d="M424 556L448 548 442 570 424 572ZM480 556L498 576 496 586 478 570ZM414 598L440 616 436 630 418 618ZM430 630H468V642H430ZM488 600L500 600 494 624 480 630Z" fill="url(#dots)" />
            <path d="M412 622Q428 638 453 642H420Z" fill="#3a6040" opacity=".6" />
          </g>
          <circle cx="453.300" cy="593.300" r="49" fill="none" stroke="#151515" stroke-width="1.200" />
          <circle cx="451.800" cy="593.800" r="49.300" fill="none" stroke="#243a24" stroke-width=".8" opacity=".7" />
          <circle cx="453.500" cy="593.300" r="24.300" fill="#b4633e" stroke="#2c4a30" /><circle cx="452.500" cy="594" r="23.300" fill="#dbffdb" stroke="#2c4a30" stroke-width=".8" />

          <circle cx="694.700" cy="566.700" r="49.300" fill="#dbffdb" />
          <g clip-path="url(#pinB)">
            <path :d="body" fill="#d58c66" />
            <path d="M646 550L658 533 654 552 648 572 652 580 662 596 664 610 644 590ZM730 526L744 560 744 572 737 556 730 548Z" fill="#d3d46a" opacity=".85" />
            <path d="M664 528L684 526 682 536 670 536ZM702 522L724 530 724 540 704 530ZM720 560L738 568 734 578 718 572ZM668 588L704 600 680 610 664 604ZM652 536L664 548 660 556Z" fill="url(#dots)" />
            <path :d="body" fill="none" stroke="#33523a" stroke-width="1.200" />
          </g>
          <circle cx="694.700" cy="566.700" r="49.300" fill="none" stroke="#151515" stroke-width="1.200" />
          <circle cx="692.800" cy="566.200" r="49" fill="none" stroke="#243a24" stroke-width=".8" opacity=".75" />
          <circle cx="694.800" cy="566.700" r="24.300" fill="#b4633e" stroke="#2c4a30" /><circle cx="693.400" cy="567" r="23.400" fill="#dbffdb" stroke="#2c4a30" stroke-width=".8" />

          <path d="M760.700 436L772 437.300 766.700 490 755.300 488Z" fill="url(#arrowG)" />
          <path d="M749 485.300Q761 484 772.700 488.700L759 510Z" fill="url(#headG)" />

          <path d="M1330 250L1344 248 1393 266 1406 277Z" fill="#777" opacity=".45" filter="url(#soft)" />
          <path d="M1361.700 200.700L1410.700 218.700 1393.300 267.300 1344.300 251Z" fill="url(#cubeG)" stroke="#8c8c8c" stroke-width=".8" stroke-dasharray="3 2" />
          <path d="M1366.700 213.300L1398 224 1388 255 1357 244Z" fill="#dfe1e4" />
          <text transform="translate(1377.500 234.500) rotate(14)" y="5" text-anchor="middle" font-size="13.500" font-weight="700" fill="#8e9299" textLength="37" lengthAdjust="spacingAndGlyphs">FRONT</text>
          <g font-size="12.500" font-weight="600" text-anchor="middle"><text x="1367" y="199.500" fill="#8df58d">Y</text><text x="1340" y="256.300" fill="#8080f4">Z</text><text x="1400.700" y="271" fill="#fa8484">X</text></g>
          <mask id="fade"><linearGradient id="fadeG"><stop offset="0" stop-color="#000" /><stop offset=".12" stop-color="#fff" /><stop offset=".46" stop-color="#fff" /><stop offset=".6" stop-color="#000" /></linearGradient><rect x="440" y="800" width="1000" height="70" fill="url(#fadeG)" /></mask>
          <rect x="440" y="815" width="1000" height="46" fill="url(#floor)" mask="url(#fade)" />
        </svg>

        <aside class="browser">
          <div class="panelhead">
            <svg class="rew" viewBox="0 0 10 7"><path d="M5 0V7L0 3.500ZM10 0V7L5 3.500Z" fill="#333" /></svg>
            <span v-fit="50">BROWSER</span>
            <svg class="dot" viewBox="0 0 10 10"><circle cx="5" cy="5" r="4.600" fill="#333" /><path d="M2.500 5H7.500" stroke="#fff" stroke-width="1.500" /></svg>
            <i class="edge"></i>
          </div>
          <div v-for="(r, n) in rows" :key="n" class="row" :style="{ paddingLeft: 16 + r.level * 18 + 'px' }">
            <span class="exp">
              <svg v-if="r.exp === 'open'" width="12" height="12" viewBox="0 0 12 12"><path d="M1 11.500H11.500V.8Z" fill="url(#tri)" stroke="#333" stroke-width=".9" /></svg>
              <svg v-else-if="r.exp === 'closed'" class="shut" width="10" height="14" viewBox="0 0 10 14"><path d="M.8 1V13H2.500L9 7 2.500 1Z" fill="#e8eaec" stroke="#333" /></svg>
            </span>
            <div class="cell" :class="{ bold: r.bold }" :style="{ width: r.w + 'px' }">
              <i v-if="r.dark" class="shade" :style="{ left: r.darkFrom + 'px', width: r.darkW + 'px', background: r.dark }"></i>
              <span v-if="r.lead" class="lead"><svg><use :href="'#' + r.lead" /></svg></span>
              <svg class="nicon"><use :href="'#' + r.icon" /></svg>
              <span v-fit="r.tw" class="ntext">{{ r.text }}</span>
              <span v-if="r.target" class="target" :class="{ hot: r.hot }"><svg viewBox="0 0 14 14"><circle cx="7" cy="7" r="6" fill="#fff" stroke="#333" stroke-width="1.200" /><circle cx="7" cy="7" r="2.500" fill="#222" /></svg></span>
            </div>
          </div>
        </aside>

        <div class="comments panelhead">
          <span v-fit="62">COMMENTS</span>
          <svg class="dot" viewBox="0 0 10 10"><circle cx="5" cy="5" r="4.600" fill="#333" /><path d="M2.500 5H7.500M5 2.500V7.500" stroke="#fff" stroke-width="1.400" /></svg>
          <i class="edge"></i>
        </div>

        <div class="started">
          <div class="shead"><svg class="rew" viewBox="0 0 10 7"><path d="M5 0V7L0 3.500ZM10 0V7L5 3.500Z" fill="#333" /></svg></div>
          <svg class="stext" viewBox="0 0 22 182"><text transform="translate(7 2.500) rotate(90)" font-size="11" fill="#555" textLength="93" lengthAdjust="spacingAndGlyphs">GETTING STARTED</text></svg>
          <div class="sfoot"></div>
        </div>

        <div class="controls">
          <div class="chip wide"><span v-fit="106">Load Path Criticality</span><i class="caret"></i></div>
          <div class="chip narrow">
            <svg width="16" height="16" viewBox="0 0 16 16"><circle cx="8" cy="8" r="5" fill="none" stroke="#555" stroke-width="2" /><circle cx="8" cy="8" r="6.800" fill="none" stroke="#555" stroke-width="2.200" stroke-dasharray="2.670 2.670" /><circle cx="8" cy="8" r="1.700" fill="#555" /></svg>
            <svg width="12" height="12" viewBox="0 0 12 12"><path d="M1 11.500H11.500V.8Z" fill="url(#tri)" stroke="#333" stroke-width=".9" /></svg>
          </div>
        </div>

        <svg class="legend" viewBox="0 0 110 256">
          <defs>
            <linearGradient id="scale" x1="0" y1="0" x2="0" y2="1"><stop offset="0" stop-color="#f00" /><stop offset=".37" stop-color="#ffe800" /><stop offset=".42" stop-color="#ff0" /><stop offset=".6" stop-color="#ff0" /><stop offset=".8" stop-color="#80f800" /><stop offset="1" stop-color="#00f000" /></linearGradient>
            <linearGradient id="lowA" x1="0" y1="0" x2="0" y2="1"><stop offset="0" stop-color="#a0a0a0" /><stop offset="1" stop-color="#2c2c2c" /></linearGradient>
            <linearGradient id="lowB" x1="0" y1="0" x2="0" y2="1"><stop offset="0" stop-color="#424242" /><stop offset="1" stop-color="#181818" /></linearGradient>
            <filter id="glow" x="-50%" y="-10%" width="200%" height="120%"><feGaussianBlur stdDeviation="2.200" /></filter>
          </defs>
          <rect x="7" y="3" width="21" height="242" fill="#000" opacity=".65" filter="url(#glow)" />
          <rect x="7" y="4" width="20" height="120" fill="url(#scale)" />
          <rect x="7" y="124" width="20" height="120" fill="url(#lowB)" /><rect x="9" y="124" width="7.500" height="119" fill="url(#lowA)" /><path d="M16.500 124V244M7.500 124V244" stroke="#888" stroke-width=".8" />
          <g v-for="k in ticks" :key="k.y">
            <path :d="`M27 ${k.y + 0.5}H${k.t ? 37 : 32}`" stroke="#666" :stroke-width="k.bold ? 1.8 : 1" />
            <text v-if="k.t" :x="56" :y="k.y + (k.t === 'Target' ? 3 : 4.3)" :textLength="k.w" lengthAdjust="spacingAndGlyphs">{{ k.t }}</text>
          </g>
        </svg>

        <dl class="mass">
          <dt v-fit="67">Mass Ratio:</dt><dd><span v-fit="42">50.85%</span></dd>
          <dt v-fit="83">Approx. Mass:</dt><dd><span v-fit="48">0.162 kg</span></dd>
        </dl>

        <div class="navbar">
          <svg class="n1"><use href="#v-orbit" /></svg><i class="caret n2"></i>
          <svg class="n3"><use href="#v-look" /></svg>
          <svg class="n4"><use href="#v-hand" /></svg>
          <svg class="n5"><use href="#v-zoom" /></svg>
          <svg class="n4"><use href="#v-fit" /></svg><i class="caret n6"></i>
          <svg class="n7"><use href="#v-screen" /></svg><i class="caret n8"></i>
          <svg class="n9"><use href="#v-grid" /></svg><i class="caret n8"></i>
        </div>
      </section>
    </main>

    <footer class="floor">
      <div class="dock">
        <div v-for="d in dock" :key="d.id" class="slot">
          <svg viewBox="0 0 30 30">
            <use :href="'#' + d.id" width="30" height="30" />
            <text v-for="t in d.texts ?? []" :key="t.t" :class="{ mono: t.mono }" :x="t.x" :y="t.y" :font-size="t.size" :textLength="t.w" lengthAdjust="spacingAndGlyphs" :fill="t.fill" :transform="`rotate(${t.tilt ?? 0} 15 15)`">{{ t.t }}</text>
          </svg>
          <i v-if="d.on"></i>
        </div>
        <span class="split"></span>
        <div v-for="d in dockRight" :key="d" class="slot"><svg><use :href="'#' + d" /></svg></div>
      </div>
    </footer>
  </div>
</template>

<style>
html, body { margin: 0; overflow: hidden; }
</style>

<style scoped>
.desktop { width: 1440px; height: 900px; overflow: hidden; display: flex; flex-direction: column; background: #c00; font-family: "Open Sans", "Noto Sans", sans-serif; font-size: 11px; color: #333; }
.sprite { display: block; height: 0; flex: none; }
span, b { white-space: nowrap; flex: none; }
svg { flex: none; }
.caret { flex: none; width: 0; height: 0; border: 3px solid transparent; border-top: 4.5px solid #333; border-bottom: 0; }
.caret.dim { border-top-color: #888; }

.menubar { height: 22px; flex: none; display: flex; align-items: center; background: #ffc5c5; border-bottom: 1px solid #8b0000; color: #4c0f10; font: 14px/22px Inter, sans-serif; }
.apple { width: 14px; height: 17px; margin: -2px 0 0 20.5px; }
.appname { margin-left: 20px; font-weight: 700; }
.menus { display: flex; gap: 18.6px; margin-left: 18.5px; }
.status { margin-left: auto; display: flex; align-items: center; padding-right: 23px; }
.status svg { height: 22px; }
.w27 { width: 27px; } .w28 { width: 28px; } .w30 { width: 30px; }
.pct { font-size: 12.5px; margin-left: 9.5px; }
.battery { width: 23px; margin-left: 5px; }
.date { margin-left: 17px; }
.time { margin-left: 8px; }
.search { margin-left: 12px; }
.siri { margin-left: 3px; }
.list { width: 18px; margin-left: 5px; }

.window { height: 838px; flex: none; display: flex; flex-direction: column; background: #fff; border-radius: 5px 5px 4px 4px; overflow: hidden; }
.titlebar { height: 21px; flex: none; display: flex; align-items: center; background: linear-gradient(#eceaec, #d2d0d2); border-bottom: 1px solid #b4b2b2; }
.light { width: 10px; height: 10px; border-radius: 50%; border: 1px solid; margin-left: 8px; }
.light.red { background: #fc4446; border-color: #e0343a; }
.light.amber { background: #fdbc0a; border-color: #e0a010; }
.light.green { background: #08d03c; border-color: #10b030; }
.title { margin-left: 534px; font: 13px/21px Inter, sans-serif; color: #333; padding-top: 1px; }

.tabs { height: 39px; flex: none; display: flex; align-items: flex-end; gap: 2px; padding-left: 21px; background: #56738e; }
.tab { position: relative; width: 198px; height: 31px; display: flex; align-items: center; border-radius: 3px 3px 0 0; background: #465c72; color: #8d98a3; font-size: 12.5px; }
.tabtext { padding-top: 2px; }
.tab.active { background: #f3f3f7; color: #555; font-weight: 600; }
.tabicon { width: 16px; height: 15px; margin: -4px 10px 0 10px; }
.ring { position: absolute; left: 162px; top: 4.5px; width: 6px; height: 6px; border: 1.2px solid #3f9c94; border-radius: 50%; }
.active .ring { border-color: #7ccdb8; }
.close { position: absolute; left: 179px; top: 11px; width: 10px; height: 10px; stroke: #67727c; }
.active .close { stroke: #929292; }
.tab.plus { width: 30px; justify-content: center; }

.quick { height: 26px; flex: none; display: flex; align-items: center; background: #f2f2f2; border-bottom: 1px solid #e6e6e6; }
.q-grid { width: 17px; height: 17px; margin-left: 12px; }
.q-file { width: 13px; height: 17px; margin: 0 6px 0 25px; }
.q-save { width: 16px; height: 16px; margin: 0 25px; }
.q-undo { width: 17px; height: 12px; margin-right: 6px; }
.q-redo { width: 17px; height: 12px; margin: 0 6px 0 15px; }
.q-clock { width: 16px; height: 16px; margin: 0 28.5px 0 auto; }
.user { margin: -2px 6px 0 0; }
.help { width: 16px; height: 16px; border-radius: 50%; background: #666; color: #fff; font-weight: 700; font-size: 13px; line-height: 16px; text-align: center; margin: 0 4px 0 24px; }
.help + .caret { margin-right: 13px; }

.toolbar { height: 60px; flex: none; width: 1362px; margin: 4px 0 0 4px; display: flex; background: #f1f1f1; }
.workspace { width: 105px; box-sizing: border-box; display: flex; align-items: center; padding-left: 6px; flex: none; }
.workspace b { font-size: 11px; font-weight: 700; margin-right: 5px; color: #2e2e2e; }
.grip { width: 3px; height: 23px; border: solid #bbb; border-width: 0 1px; margin-right: 5.5px; }
.group { flex: none; display: flex; flex-direction: column; align-items: center; position: relative; }
.group::before { content: ""; position: absolute; left: -1px; top: 4px; width: 1.5px; height: 52px; background: #dadada; }
.icons { display: flex; gap: 5px; padding-top: 2px; }
.icons svg { width: 38px; height: 38px; display: block; }
.glabel { display: flex; align-items: center; gap: 2.5px; height: 16px; margin-top: 4.5px; line-height: 16px; font-size: 11.2px; color: #2c2c2c; }
.glabel .caret { margin-top: -1px; }

.viewport { flex: 1; position: relative; }
.scene { position: absolute; left: 0; top: 0; width: 1440px; height: 686px; display: block; }
.browser { position: relative; width: 205px; margin-left: 4px; padding-top: 4px; }
.panelhead { height: 23px; display: flex; align-items: center; border: 1px solid #c8c8c8; background: #f1f1f1; color: #666; }
.panelhead span { margin-top: -2px; }
.rew { width: 10px; height: 7px; margin: 0 10px 0 4px; }
.panelhead .dot { width: 10px; height: 10px; margin-left: auto; }
.edge { width: 2px; height: 11px; border: solid #999; border-width: 0 0 0 1px; border-right: 1px solid #bbb; margin: 0 0 0 6.5px; }
.comments { position: absolute; left: 4px; top: 657px; width: 203px; height: 24px; border-top: 0; }
.comments span { margin-left: 24px; }
.row { display: flex; height: 24px; align-items: center; }
.browser .row:nth-child(2) { margin-top: 3px; }
.exp { width: 20px; display: flex; }
.shut { margin-left: 2px; }
.cell { position: relative; height: 20px; display: flex; align-items: center; background: #f1f1f1; flex: none; }
.shade { position: absolute; top: 2px; height: 16px; }
.lead { width: 25px; display: flex; position: relative; }
.lead svg { width: 16px; height: 16px; margin-left: 2px; }
.nicon { position: relative; width: 16px; height: 16px; margin: 0 14px 0 3px; }
.ntext { position: relative; margin-top: -2px; }
.bold .ntext { color: #fff; font-weight: 700; }
.target { position: absolute; right: 0; top: 0; width: 25px; height: 20px; display: flex; justify-content: center; align-items: center; box-sizing: border-box; padding-right: 5px; }
.target.hot { background: #abcffc; }
.target svg { width: 14px; height: 14px; }

.started { position: absolute; left: 1413px; top: 123px; width: 24px; height: 212px; box-sizing: border-box; display: flex; flex-direction: column; background: #f1f1f1; border: 1px solid #c4c4c4; border-radius: 3px; box-shadow: 0 2px 6px rgba(0, 0, 0, .35); }
.shead { height: 18px; background: #c9c9c9; display: flex; align-items: center; padding-top: 4px; box-sizing: border-box; }
.shead .rew { margin-left: 5px; }
.stext { width: 22px; height: 182px; font-family: "Liberation Sans", Arial, sans-serif; }
.sfoot { flex: 1; background: #c9c9c9; }

.controls { position: absolute; left: 1148px; top: 319px; display: flex; flex-direction: column; gap: 8px; align-items: flex-start; }
.chip { height: 22px; display: flex; align-items: center; background: #f1f1f1; }
.chip span { margin-top: -1px; }
.wide { width: 122px; padding-left: 9px; gap: 3px; }
.narrow { width: 56px; padding-left: 6px; gap: 17px; }
.legend { position: absolute; left: 1280px; top: 312px; width: 110px; height: 256px; font: bold 12px "Liberation Sans", Arial, sans-serif; fill: #111; }
.mass { position: absolute; left: 1221.5px; top: 576px; margin: 0; display: grid; grid-template-columns: 100px auto; justify-items: start; font: bold 11.7px/13.3px "Liberation Sans", Arial, sans-serif; color: #333; white-space: nowrap; }
.mass dd { margin: 0; }

.navbar { position: absolute; left: 613px; top: 658px; width: 214px; height: 24px; display: flex; align-items: center; background: #ececec; }
.navbar svg { width: 18px; height: 18px; }
.n1 { margin-left: 2px; } .n2 { margin-left: 4px; } .n3 { margin-left: 5px; }
.n4 { margin-left: 8px; } .n5 { margin-left: 8px; } .n6 { margin-left: 4px; }
.n7 { margin-left: 13px; } .n8 { margin-left: 1px; } .n9 { margin-left: 6px; }

.floor { flex: 1; display: flex; padding-left: 485px; background: linear-gradient(90deg, #e80000, rgba(232, 0, 0, 0) 32px, rgba(232, 0, 0, 0) 1408px, #e80000), linear-gradient(#6c0000, #a80000 45%, #e40000); }
.dock { width: 470px; box-sizing: border-box; padding-left: 3px; display: flex; background: #f0383c; border-radius: 4px 4px 0 0; }
.slot { width: 30px; flex: none; display: flex; flex-direction: column; align-items: center; padding-top: 3px; }
.slot svg { width: 30px; height: 30px; display: block; font-family: Inter, sans-serif; }
.slot .mono { font-family: "Liberation Mono", monospace; font-weight: bold; }
.slot i { width: 3px; height: 3px; margin-top: 1px; background: #5c0a0c; border-radius: 1px; }
.split { width: 1px; height: 29px; margin: 5px 6px 0 7px; background: #a8161c; }
</style>
